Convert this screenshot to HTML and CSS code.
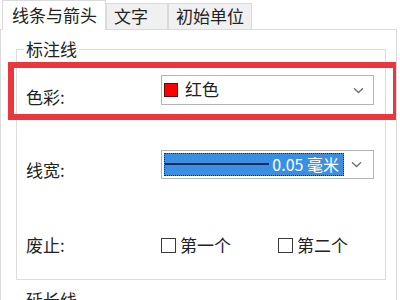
FILE: index.html
```html
<!DOCTYPE html>
<html lang="zh-CN">
<head>
<meta charset="utf-8">
<link rel="stylesheet" href="styles.css">
</head>
<body>
<div class="tabs">
  <div class="tab active">线条与箭头</div>
  <div class="tab">文字</div>
  <div class="tab">初始单位</div>
</div>
<div class="panel">
  <fieldset class="group">
    <legend>标注线</legend>
    <div class="row hl">
      <span class="lbl">色彩:</span>
      <div class="combo">
        <span class="swatch"></span>
        <span class="ctext">红色</span>
        <svg class="chev" width="11" height="7" viewBox="0 0 11 7"><path d="M1 1.2 L5.5 5.5 L10 1.2" fill="none" stroke="#707070" stroke-width="1.3"/></svg>
      </div>
    </div>
    <div class="row lwrow">
      <span class="lbl">线宽:</span>
      <div class="combo lw">
        <div class="sel">
          <span class="line"></span>
          <span class="val">0.05 毫米</span>
        </div>
        <svg class="chev" width="11" height="7" viewBox="0 0 11 7"><path d="M1 1.2 L5.5 5.5 L10 1.2" fill="none" stroke="#707070" stroke-width="1.3"/></svg>
      </div>
    </div>
    <div class="row chkrow">
      <span class="lbl">废止:</span>
      <label class="chk"><span class="box"></span>第一个</label>
      <label class="chk"><span class="box"></span>第二个</label>
    </div>
  </fieldset>
  <fieldset class="group second">
    <legend>延长线</legend>
  </fieldset>
</div>
</body>
</html>
```

FILE: styles.css
```css
* { box-sizing: border-box; }

html, body {
  margin: 0;
  width: 400px;
  height: 300px;
  overflow: hidden;
  background: #ffffff;
}

body {
  font-family: "Noto Sans CJK SC", "Noto Sans", sans-serif;
  font-size: 17px;
  color: #222222;
}

.tabs {
  display: flex;
  align-items: flex-end;
  height: 29px;
  padding-left: 2px;
}

.tab {
  height: 26px;
  line-height: 24px;
  min-width: 62px;
  padding: 0 7px;
  background: #f0f0f0;
  border: 1px solid #dadada;
  border-bottom: none;
  white-space: nowrap;
}

.tab.active {
  height: 30px;
  line-height: 28px;
  margin-bottom: -1px;
  padding: 0 8px 0 9px;
  background: #ffffff;
  position: relative;
  z-index: 1;
}

.panel {
  width: 397px;
  height: 271px;
  border: 1px solid #dadada;
  border-bottom: none;
  padding: 0 10px 0 15px;
  background: #ffffff;
  overflow: hidden;
}

.group {
  margin: 9px 0 0 0;
  padding: 0 11px 19px 9px;
  border: 1px solid #dcdcdc;
  min-width: 0;
}

.group legend {
  padding: 0 2px;
  margin-left: -2px;
  line-height: 20px;
  font-size: 17px;
}

.row {
  display: grid;
  grid-template-columns: 135px 1fr;
  align-items: center;
}

.lbl {
  padding-top: 14px;
  line-height: 20px;
}

.hl {
  margin: 3px -25px 0 -18px;
  border: 6px solid #e8383d;
  padding: 5px 19px 7px 12px;
}

.combo {
  position: relative;
  display: flex;
  align-items: center;
  height: 30px;
  border: 1px solid #b4b4b4;
  background: #ffffff;
  padding-left: 2px;
}

.swatch {
  width: 14px;
  height: 14px;
  background: #ff0000;
  border: 1px solid #5a1010;
  margin-right: 7px;
}

.ctext {
  line-height: 20px;
  margin-top: -2px;
}

.chev {
  margin-left: auto;
  margin-right: 9px;
}

.lwrow {
  margin-top: 28px;
}

.lwrow .lbl {
  padding-top: 12px;
}

.combo.lw {
  height: 29px;
  padding: 2px;
}

.sel {
  display: flex;
  align-items: center;
  width: 180px;
  height: 23px;
  background: #3b8fe3;
  outline: 1px dotted #1a2a40;
  outline-offset: -1px;
  padding: 0 5px 0 1px;
}

.line {
  flex: 1;
  height: 2px;
  background: #0d2b5a;
  margin-right: 3px;
}

.val {
  color: #ffffff;
  font-size: 16px;
  line-height: 20px;
  margin-top: -1px;
}

.chkrow {
  grid-template-columns: 135px 117px 1fr;
  height: 30px;
  margin-top: 50px;
}

.chkrow .lbl {
  padding-top: 0;
}

.chk {
  display: flex;
  align-items: center;
  line-height: 20px;
}

.box {
  width: 15px;
  height: 15px;
  border: 1px solid #3a3a3a;
  background: #ffffff;
  margin-right: 4px;
}

.second {
  margin-top: 10px;
  height: 40px;
}
```
